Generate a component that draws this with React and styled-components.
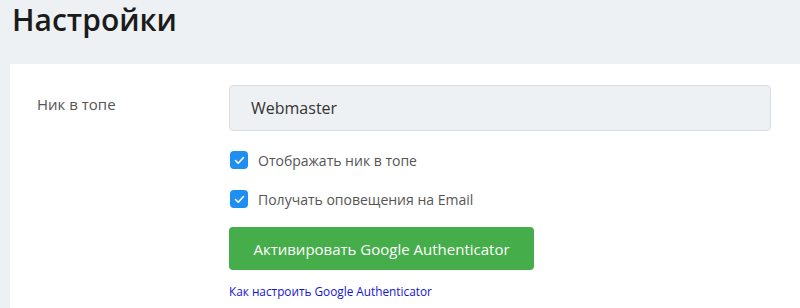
import React from "react";
import styled, { createGlobalStyle } from "styled-components";

const Global = createGlobalStyle`
  html, body { margin: 0; padding: 0; background: #eef1f4; }
  body { font-family: "Open Sans", "Liberation Sans", sans-serif; }
  * { box-sizing: border-box; }
`;

const Page = styled.div`
  width: 800px;
  height: 308px;
  overflow: hidden;
  padding: 0 0 0 10px;
`;

const Title = styled.h1`
  margin: 0;
  padding: 2px 0 0 2px;
  height: 64px;
  line-height: 36px;
  font-size: 30px;
  font-weight: 600;
  color: #1b1b1b;
`;

const Card = styled.div`
  background: #fff;
  padding: 21px 29px 20px 27px;
  display: grid;
  grid-template-columns: 192px 1fr;
  min-height: 260px;
`;

const Label = styled.div`
  font-size: 15px;
  color: #555;
  padding-top: 8px;
  line-height: 22px;
`;

const Fields = styled.div`
  display: flex;
  flex-direction: column;
`;

const Input = styled.div`
  height: 46px;
  background: #eef1f4;
  border: 1px solid #d9dde1;
  border-radius: 4px;
  padding: 0 21px;
  display: flex;
  align-items: center;
  font-size: 16px;
  color: #333;
`;

const Check = styled.label`
  display: flex;
  align-items: center;
  gap: 10px;
  font-size: 14px;
  color: #555;
  height: 20px;
  margin-top: ${(p) => p.$top}px;
`;

const Box = styled.span`
  width: 18px;
  height: 18px;
  border-radius: 4px;
  background: #1f8ef1;
  display: flex;
  align-items: center;
  justify-content: center;
  margin-left: 1px;
`;

const Button = styled.button`
  margin-top: 18px;
  width: 305px;
  height: 43px;
  background: #45ad49;
  border: none;
  border-radius: 4px;
  color: #fff;
  font-family: inherit;
  font-size: 15px;
  cursor: pointer;
  padding: 0;
`;

const Link = styled.a`
  margin-top: 13px;
  font-size: 11.8px;
  color: #1414d4;
  text-decoration: none;
  line-height: 16px;
`;

const Tick = () => (
  <svg width="11" height="9" viewBox="0 0 11 9">
    <path d="M1.5 4.5 L4.2 7.2 L9.5 1.5" fill="none" stroke="#fff" strokeWidth="1.6" strokeLinecap="round" strokeLinejoin="round" />
  </svg>
);

export default function App() {
  return (
    <Page>
      <Global />
      <Title>Настройки</Title>
      <Card>
        <Label>Ник в топе</Label>
        <Fields>
          <Input>Webmaster</Input>
          <Check $top={19}>
            <Box><Tick /></Box>
            Отображать ник в топе
          </Check>
          <Check $top={19}>
            <Box><Tick /></Box>
            Получать оповещения на Email
          </Check>
          <Button>Активировать Google Authenticator</Button>
          <Link href="#">Как настроить Google Authenticator</Link>
        </Fields>
      </Card>
    </Page>
  );
}
